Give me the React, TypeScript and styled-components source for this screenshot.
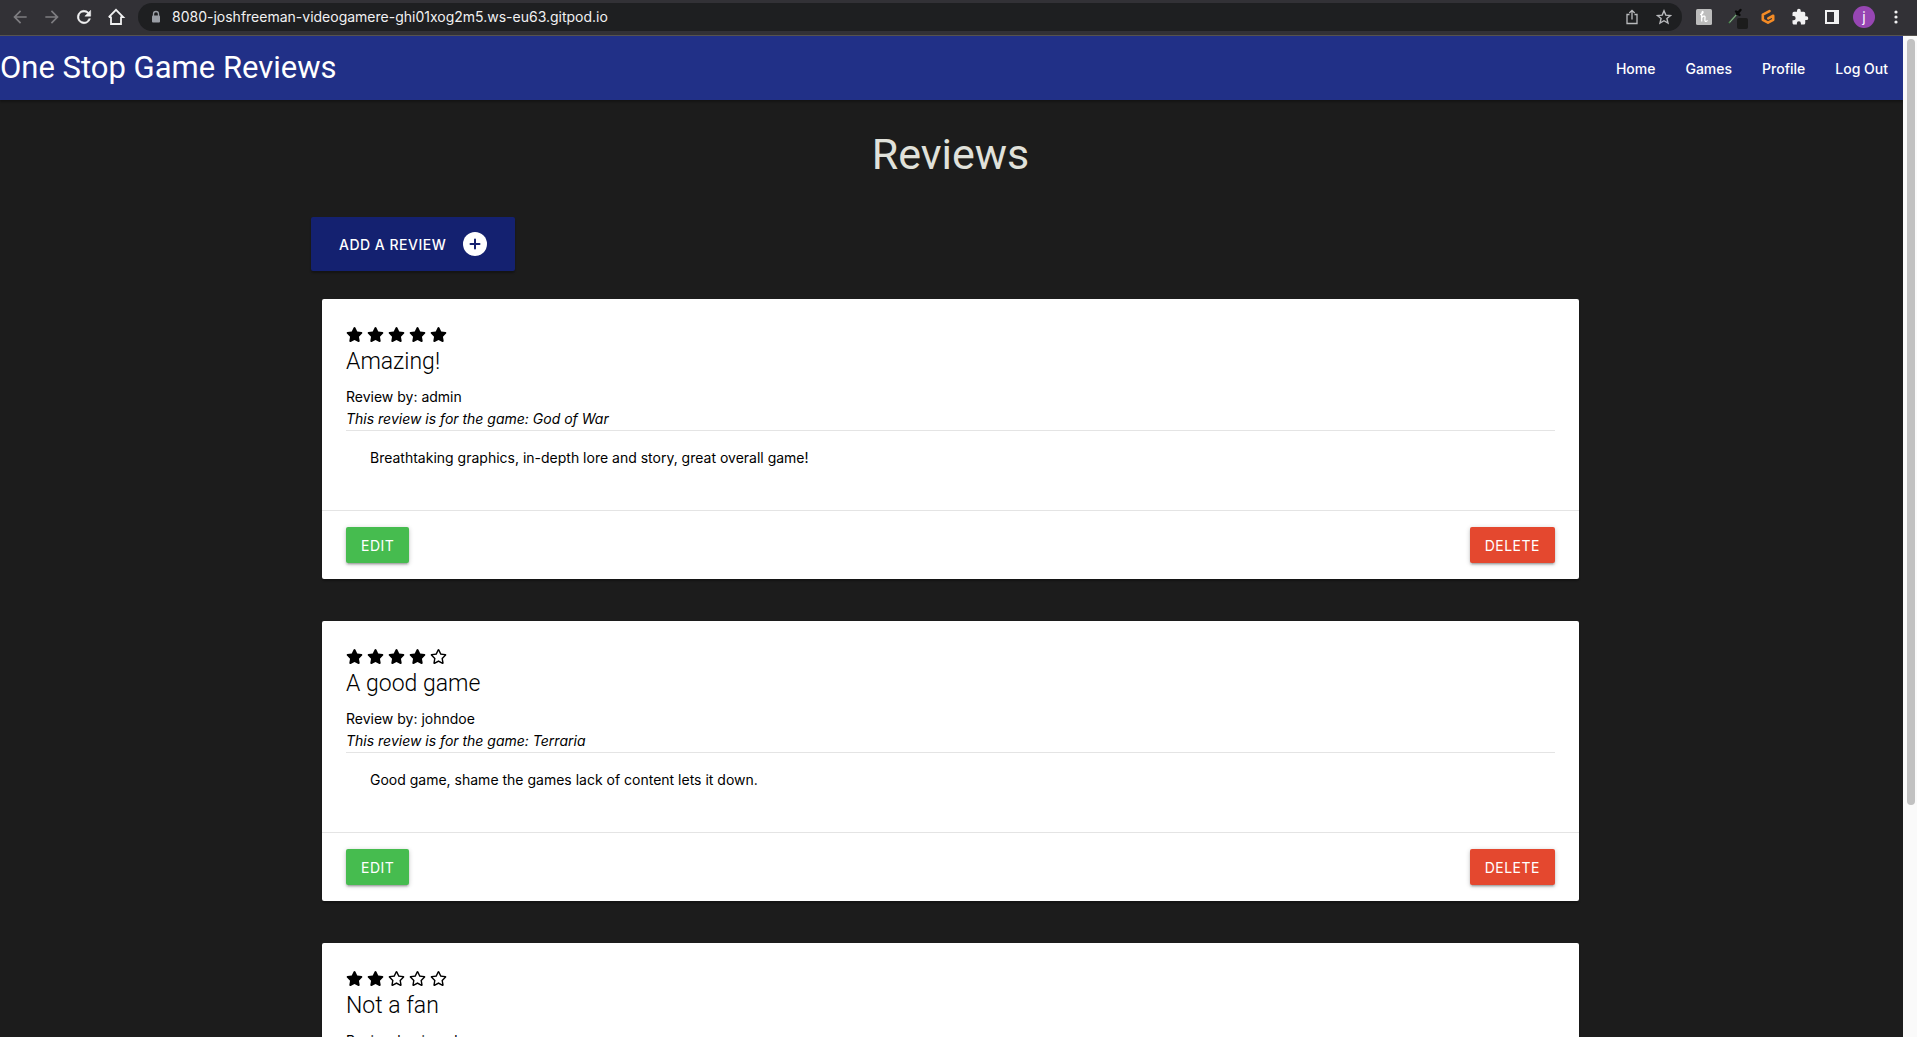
import React from "react";
import styled, { createGlobalStyle } from "styled-components";

const GlobalStyle = createGlobalStyle`
  *, *::before, *::after { box-sizing: border-box; }
  body {
    margin: 0;
    background: #1c1c1c;
    color: #000;
    font-family: Inter, "Liberation Sans", sans-serif;
    font-size: 14px;
    line-height: 22px;
  }
  button, input { font-family: inherit; }
`;

const displayFont = `Roboto, Inter, "Liberation Sans", sans-serif`;

const Window = styled.div`
  display: flex;
  flex-direction: column;
  height: 100vh;
  overflow: hidden;
`;

const BrowserBar = styled.header`
  display: flex;
  flex: none;
  align-items: center;
  height: 36px;
  padding: 0 9px 2px 8px;
  background: #323136;
  border-bottom: 1px solid #56534f;
`;

const ToolGroup = styled.div<{ $gap: number }>`
  display: flex;
  align-items: center;
  gap: ${(p) => p.$gap}px;
`;

const ToolButton = styled.button<{ $dim?: boolean }>`
  display: flex;
  align-items: center;
  justify-content: center;
  width: 24px;
  height: 24px;
  padding: 0;
  border: 0;
  background: none;
  color: ${(p) => (p.$dim ? "#7d7c80" : "#f1f1f2")};
`;

const AddressBar = styled.div`
  display: flex;
  flex: 1;
  align-items: center;
  height: 28px;
  margin: 0 10px 0 10px;
  padding: 0 6px 0 12px;
  border-radius: 14px;
  background: #1e1f21;
  color: #b9babd;
`;

const AddressInput = styled.input`
  flex: 1;
  min-width: 0;
  padding: 0 0 0 10px;
  border: 0;
  outline: 0;
  background: none;
  color: #f1f1f2;
  font-size: 14px;
  line-height: 22px;
`;

const Avatar = styled.span`
  width: 22px;
  height: 22px;
  border-radius: 50%;
  background: #9746b3;
  color: #fff;
  font-size: 14px;
  line-height: 22px;
  text-align: center;
`;

const Viewport = styled.div`
  display: flex;
  flex: 1;
  min-height: 0;
`;

const Page = styled.div`
  flex: 1;
  min-width: 0;
  overflow: hidden;
`;

const ScrollTrack = styled.div`
  display: flex;
  flex-direction: column;
  flex: none;
  width: 14px;
  padding: 3px 2px 3px 4px;
  background: #fafafa;
`;

const ScrollThumb = styled.div`
  height: 77%;
  border-radius: 4px;
  background: #c1c1c1;
`;

const Nav = styled.nav`
  display: flex;
  align-items: center;
  justify-content: space-between;
  height: 64px;
  background: #213087;
  box-shadow: 0 2px 2px rgba(0, 0, 0, 0.3);
`;

const Brand = styled.a`
  color: #fff;
  font-family: ${displayFont};
  font-size: 31px;
  font-weight: 400;
  line-height: 64px;
  text-decoration: none;
`;

const NavList = styled.ul`
  display: flex;
  margin: 0;
  padding: 0;
  list-style: none;
`;

const NavLink = styled.a`
  display: block;
  padding: 1px 15px 0;
  color: #fff;
  font-size: 14px;
  font-weight: 500;
  line-height: 64px;
  text-decoration: none;
`;

const Container = styled.main`
  width: 90%;
  max-width: 1281px;
  margin: 0 auto;
  padding-right: 2px;
`;

const Heading = styled.h1`
  margin: 29px 0 38px;
  color: #e0e1da;
  font-family: ${displayFont};
  font-size: 43px;
  font-weight: 400;
  line-height: 50px;
  text-align: center;
`;

const AddButton = styled.button`
  display: flex;
  align-items: center;
  gap: 17px;
  height: 54px;
  padding: 0 28px;
  border: 0;
  border-radius: 2px;
  background: #142170;
  color: #fff;
  font-size: 14px;
  font-weight: 500;
  letter-spacing: 0.5px;
  box-shadow: 0 2px 2px rgba(0, 0, 0, 0.3);
`;

const ReviewList = styled.div`
  display: flex;
  flex-direction: column;
  gap: 42px;
  padding: 28px 11px;
`;

const Card = styled.article`
  border-radius: 2px;
  background: #fff;
  box-shadow: 0 2px 2px rgba(0, 0, 0, 0.3);
`;

const CardContent = styled.div`
  padding: 24px;
`;

const Rating = styled.div`
  display: flex;
  align-items: center;
  gap: 4px;
  height: 23px;
`;

const CardTitle = styled.h2`
  margin: 0 0 8px;
  font-family: ${displayFont};
  font-size: 23px;
  font-weight: 300;
  line-height: 32px;
`;

const Line = styled.p<{ $italic?: boolean }>`
  margin: 0;
  font-style: ${(p) => (p.$italic ? "italic" : "normal")};
`;

const ReviewText = styled.p`
  margin: 0;
  padding: 16px 24px 17px;
  border-top: 1px solid #e4e4e4;
`;

const CardActions = styled.div`
  display: flex;
  justify-content: space-between;
  padding: 16px 24px;
  border-top: 1px solid #e4e4e4;
`;

const ActionButton = styled.button<{ $color: string }>`
  height: 36px;
  padding: 0 15px;
  border: 0;
  border-radius: 2px;
  background: ${(p) => p.$color};
  color: #fff;
  font-size: 14px;
  letter-spacing: 0.5px;
  box-shadow: 0 2px 2px rgba(0, 0, 0, 0.14), 0 3px 1px -2px rgba(0, 0, 0, 0.12),
    0 1px 5px rgba(0, 0, 0, 0.2);
`;

const STAR_SOLID =
  "M259.3 17.8L194 150.2 47.9 171.5c-26.2 3.800-36.700 36.100-17.700 54.600l105.700 103-25 145.500c-4.500 26.300 23.200 46 46.400 33.700L288 439.600l130.700 68.700c23.200 12.200 50.900-7.400 46.400-33.700l-25-145.500 105.700-103c19-18.500 8.500-50.800-17.700-54.600L382 150.200 316.700 17.800c-11.700-23.600-45.600-23.900-57.400 0z";
const STAR_REGULAR =
  "M528.100 171.500L382 150.200 316.700 17.800c-11.700-23.600-45.600-23.900-57.400 0L194 150.200 47.900 171.500c-26.200 3.800-36.700 36.100-17.700 54.600l105.700 103-25 145.500c-4.500 26.300 23.200 46 46.400 33.700L288 439.600l130.700 68.700c23.200 12.200 50.900-7.400 46.400-33.700l-25-145.500 105.700-103c19-18.500 8.500-50.800-17.700-54.600zM388.600 312.300l23.700 138.400L288 385.400l-124.300 65.300 23.700-138.400-100.600-98 139-20.200 62.200-126 62.200 126 139 20.200-100.600 98z";

const Star = ({ filled }: { filled: boolean }) => (
  <svg width="17" height="15" viewBox="0 0 576 512" fill="currentColor" aria-hidden="true">
    <path d={filled ? STAR_SOLID : STAR_REGULAR} />
  </svg>
);

const Arrow = ({ forward }: { forward?: boolean }) => (
  <svg width="20" height="20" viewBox="0 0 24 24" fill="currentColor">
    <path
      d={
        forward
          ? "M12 4l-1.400 1.400 5.600 5.600H4v2h12.200l-5.600 5.600L12 20l8-8z"
          : "M20 11H7.800l5.600-5.600L12 4l-8 8 8 8 1.400-1.400L7.800 13H20z"
      }
    />
  </svg>
);

const reviews = [
  {
    rating: 5,
    title: "Amazing!",
    author: "admin",
    game: "God of War",
    text: "Breathtaking graphics, in-depth lore and story, great overall game!",
  },
  {
    rating: 4,
    title: "A good game",
    author: "johndoe",
    game: "Terraria",
    text: "Good game, shame the games lack of content lets it down.",
  },
  { rating: 2, title: "Not a fan", author: "janedoe", game: "", text: "" },
];

const ReviewCard = ({ review }: { review: (typeof reviews)[number] }) => (
  <Card>
    <CardContent>
      <Rating role="img" aria-label={`${review.rating} out of 5 stars`}>
        {[1, 2, 3, 4, 5].map((n) => (
          <Star key={n} filled={n <= review.rating} />
        ))}
      </Rating>
      <CardTitle>{review.title}</CardTitle>
      <Line>Review by: {review.author}</Line>
      {review.game && <Line $italic>This review is for the game: {review.game}</Line>}
      {review.text && <ReviewText>{review.text}</ReviewText>}
    </CardContent>
    {review.text && (
      <CardActions>
        <ActionButton $color="#46bc4f">EDIT</ActionButton>
        <ActionButton $color="#e4482f">DELETE</ActionButton>
      </CardActions>
    )}
  </Card>
);

const BrowserChrome = () => (
  <BrowserBar>
    <ToolGroup $gap={8}>
      <ToolButton $dim aria-label="Back"><Arrow /></ToolButton>
      <ToolButton $dim aria-label="Forward"><Arrow forward /></ToolButton>
      <ToolButton aria-label="Reload">
        <svg width="20" height="20" viewBox="0 0 24 24" fill="currentColor">
          <path d="M17.650 6.350A8 8 0 1 0 19.730 14h-2.080A6 6 0 1 1 12 6c1.660 0 3.140.69 4.220 1.780L13 11h7V4z" stroke="currentColor" strokeWidth=".6" />
        </svg>
      </ToolButton>
      <ToolButton aria-label="Home page">
        <svg width="20" height="20" viewBox="0 0 20 20" fill="none" stroke="currentColor" strokeWidth="1.800">
          <path d="M5 9.500V17h10V9.500M2.800 10.200L10 2.800l7.200 7.400H15M2.800 10.200H5" />
        </svg>
      </ToolButton>
    </ToolGroup>
    <AddressBar>
      <svg width="12" height="14" viewBox="0 0 12 14">
        <path d="M3.500 6V4a2.500 2.500 0 0 1 5 0v2" fill="none" stroke="#9a9ea5" strokeWidth="1.300" />
        <rect x="2" y="5.500" width="8" height="7" rx="1" fill="#9a9ea5" />
      </svg>
      <AddressInput aria-label="Address" defaultValue="8080-joshfreeman-videogamere-ghi01xog2m5.ws-eu63.gitpod.io" />
      <ToolGroup $gap={8}>
        <ToolButton aria-label="Share">
          <svg width="16" height="16" viewBox="0 0 16 16" fill="none" stroke="#b9babd" strokeWidth="1.300">
            <path d="M5.500 5.500H3v9h10v-9h-2.500M8 10.500V1.500M5.300 4L8 1.300 10.700 4" />
          </svg>
        </ToolButton>
        <ToolButton aria-label="Bookmark">
          <svg width="16" height="16" viewBox="0 0 16 16" fill="none" stroke="#b9babd" strokeWidth="1.400">
            <path d="M8 1.800l1.800 4.300 4.700.4-3.600 3 1.100 4.600L8 11.700l-4 2.400 1.100-4.600-3.600-3 4.700-.4z" />
          </svg>
        </ToolButton>
      </ToolGroup>
    </AddressBar>
    <ToolGroup $gap={8}>
      <ToolButton aria-label="Honey">
        <svg width="16" height="16" viewBox="0 0 16 16">
          <rect width="16" height="16" rx="1.500" fill="#bcbcbc" />
          <path d="M4 5.500c2-.5 3.500-1.500 3-2.700C6.300 1.800 5.600 4 5.700 6v6.500M5.700 9c1-2 3-2.500 3.300-1.200.2 1.200-.8 4 .4 4.500.8.300 1.600-.4 2.100-1" fill="none" stroke="#fff" strokeWidth="1.300" />
        </svg>
      </ToolButton>
      <ToolButton aria-label="Color picker">
        <svg width="24" height="24" viewBox="0 0 24 24">
          <path d="M5 18l8-9" stroke="#4d8a50" strokeWidth="1.600" />
          <path d="M6 17l7-8" stroke="#a5aaa5" strokeWidth=".7" />
          <path d="M12 6.500l3.500 3.500M13 9l3.500-4" stroke="#090909" strokeWidth="2.400" strokeLinecap="round" />
          <rect x="13" y="13" width="11" height="11" rx="2" fill="#1c1c1c" />
        </svg>
      </ToolButton>
      <ToolButton aria-label="Gitpod">
        <svg width="16" height="16" viewBox="0 0 16 16" fill="none" stroke="#f48b25" strokeWidth="2.600" strokeLinejoin="round" strokeLinecap="round">
          <path d="M9.500 2.200L2.800 5.600v5.200L8 13.700l5.200-2.900V6.700L8.300 9.300" />
        </svg>
      </ToolButton>
      <ToolButton aria-label="Extensions">
        <svg width="18" height="18" viewBox="0 0 24 24" fill="currentColor">
          <path d="M20.500 11H19V7a2 2 0 0 0-2-2h-4V3.500a2.500 2.500 0 0 0-5 0V5H4a2 2 0 0 0-2 2v3.800h1.500a2.700 2.700 0 0 1 0 5.400H2V20c0 1.100.9 2 2 2h3.800v-1.500a2.700 2.700 0 0 1 5.400 0V22H17a2 2 0 0 0 2-2v-4h1.500a2.500 2.500 0 0 0 0-5z" />
        </svg>
      </ToolButton>
      <ToolButton aria-label="Side panel">
        <svg width="14" height="14" viewBox="0 0 14 14">
          <rect x="1" y="1" width="12" height="12" fill="none" stroke="currentColor" strokeWidth="2" />
          <rect x="9" y="1" width="4" height="12" fill="currentColor" />
        </svg>
      </ToolButton>
      <ToolButton aria-label="Account"><Avatar>j</Avatar></ToolButton>
      <ToolButton aria-label="Menu">
        <svg width="4" height="14" viewBox="0 0 4 14" fill="currentColor">
          <circle cx="2" cy="2" r="1.600" />
          <circle cx="2" cy="7" r="1.600" />
          <circle cx="2" cy="12" r="1.600" />
        </svg>
      </ToolButton>
    </ToolGroup>
  </BrowserBar>
);

export default function App() {
  return (
    <>
      <GlobalStyle />
      <Window>
        <BrowserChrome />
        <Viewport>
          <Page>
            <Nav>
              <Brand href="#">One Stop Game Reviews</Brand>
              <NavList>
                {["Home", "Games", "Profile", "Log Out"].map((label) => (
                  <li key={label}><NavLink href="#">{label}</NavLink></li>
                ))}
              </NavList>
            </Nav>
            <Container>
              <Heading>Reviews</Heading>
              <AddButton>
                ADD A REVIEW
                <svg width="24" height="24" viewBox="0 0 24 24" aria-hidden="true">
                  <circle cx="12" cy="12" r="12" fill="#fff" />
                  <path d="M12 7.500v9M7.500 12h9" stroke="#142170" strokeWidth="2" strokeLinecap="round" />
                </svg>
              </AddButton>
              <ReviewList>
                {reviews.map((review) => (
                  <ReviewCard key={review.title} review={review} />
                ))}
              </ReviewList>
            </Container>
          </Page>
          <ScrollTrack><ScrollThumb /></ScrollTrack>
        </Viewport>
      </Window>
    </>
  );
}
